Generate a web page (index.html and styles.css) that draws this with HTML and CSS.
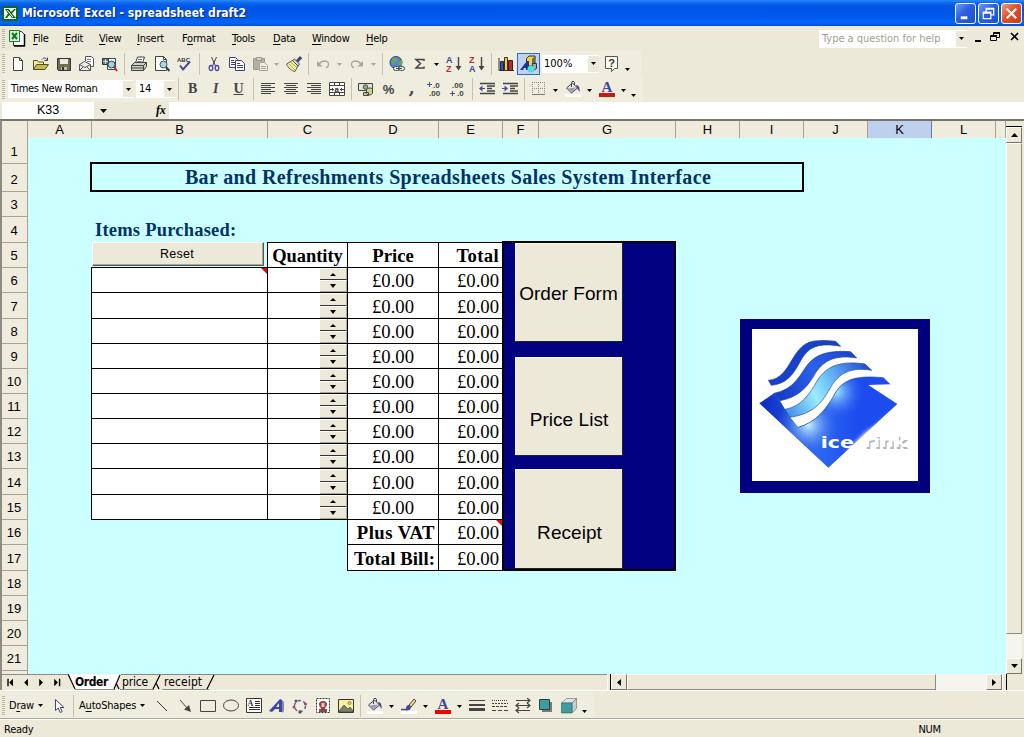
FILE: index.html
```html
<!DOCTYPE html>
<html lang="en">
<head>
<meta charset="utf-8">
<title>Microsoft Excel - spreadsheet draft2</title>
<link rel="stylesheet" href="styles.css">
</head>
<body>
<svg class="defs" width="0" height="0" aria-hidden="true">
  <defs>
    <symbol id="excel" viewBox="0 0 16 16"><path fill="#0a6a16" d="M0 1h16v15H0z"/><path fill="#fff" d="M2 3h12v11H2z"/><path fill="#0a6a16" d="M3 4h4l2 3 3-3h2L10 8.500l4 4.500h-4L7.500 10 5 13H3l3-4.500z"/><path stroke="#fff" d="m5 5 6 7"/></symbol>
    <symbol id="book" viewBox="0 0 18 18"><path fill="#fff" stroke="#333" d="M5.500 2.500h8l3 3v11h-11z"/><path fill="none" stroke="#000" stroke-width="1.500" d="M16.500 5v12H6"/><path fill="#d9f0d4" stroke="#16812a" d="M1.500 1.500h10v11h-10z"/><path stroke="#0b7a1c" stroke-width="2" d="m4 4 5 6M9 4l-5 6"/></symbol>
    <symbol id="new" viewBox="0 0 16 16"><path fill="#fff" stroke="#444" d="M3.500 1.500h6l3 3v10h-9zM9.500 1.500v3h3"/></symbol>
    <symbol id="open" viewBox="0 0 16 16"><path fill="#f2ef9a" stroke="#55502a" d="M.5 13.500v-9h4l1 1.500h5v2"/><path fill="#c4bd4e" stroke="#55502a" d="m.5 13.500 3-5h12l-3.500 5z"/><path fill="none" stroke="#444" d="M9 3.500c2-2.500 4-1.500 5 .5M14.500 1.500v3h-3"/></symbol>
    <symbol id="save" viewBox="0 0 16 16"><path fill="#6f6f4c" stroke="#333" d="M1.500 2.500h13v12h-12l-1-1z"/><path fill="#e8e8e4" d="M4 3h8v5H4z"/><path fill="#bbb" d="M5 11h6v3H5z"/><path fill="#333" d="M6 11h2v3H6z"/></symbol>
    <symbol id="mail" viewBox="0 0 16 16"><path fill="#fff" stroke="#555" d="M6.500 5V.5h6l2 2v8h-3"/><path stroke="#77a" d="M8 3.500h4M8 5.500h4"/><path fill="#eee" stroke="#555" d="m.5 8.500 5-3 6 3v6H.5z"/><path fill="none" stroke="#555" d="m.5 8.500 5.500 3 5.500-3M.5 14.500 4 11M11.500 14.500 8 11"/></symbol>
    <symbol id="search" viewBox="0 0 16 16"><path fill="#fff" stroke="#445" d="M5.500 2.500h8v11h-8z"/><path fill="#577" stroke="#334" d="M.5 2.500h6v6h-6z"/><path stroke="#ddd" d="M1 5.500h5M3.500 3v5"/><circle cx="9.500" cy="8.500" r="3.500" fill="#9cd5dd" stroke="#345"/><path stroke="#c4272d" stroke-width="2" d="m12 11 3 4"/></symbol>
    <symbol id="print" viewBox="0 0 16 16"><path fill="#fff" stroke="#444" d="m4.500 7 2-6h7l-2 6z"/><path stroke="#777" d="M7 3.500h4M6.500 5.500h4"/><path fill="#cfcfc4" stroke="#444" d="m.5 9.500 3-3h12v4l-3 4H.5z"/><path fill="none" stroke="#444" d="M.5 9.500h12l3-3M12.500 9.500v5M1 12h11"/></symbol>
    <symbol id="preview" viewBox="0 0 16 16"><path fill="#fff" stroke="#444" d="M1.500.5h8l3 3v11h-11zM9.500.5v3h3"/><circle cx="9.500" cy="8.500" r="3.500" fill="#a6d9df" stroke="#456"/><path stroke="#444" stroke-width="2" d="m12 11 3.500 4"/></symbol>
    <symbol id="spell" viewBox="0 0 16 16"><text x="0" y="5.500" class="tiny">ABC</text><path fill="none" stroke="#4a4aa0" stroke-width="2" d="m3 9.500 3 4 7-8"/></symbol>
    <symbol id="cut" viewBox="0 0 16 16"><path fill="none" stroke="#444" d="m5.500 1 4 9M10.500 1l-4 9"/><g fill="none" stroke="#4a4aa0" stroke-width="1.300"><ellipse cx="5" cy="12" rx="1.800" ry="2.500"/><ellipse cx="11" cy="12" rx="1.800" ry="2.500"/></g></symbol>
    <symbol id="copy" viewBox="0 0 16 16"><g fill="#fff" stroke="#3f3f80"><path d="M.5 1.500h6l2 2v8h-8z"/><path d="M6.500 4.500h6l3 3v7h-9z"/><path d="M2 4.500h3M2 6.500h4M2 8.500h4M8 7.500h3M8 9.500h6M8 11.500h6"/></g></symbol>
    <symbol id="paste" viewBox="0 0 16 16"><path fill="#b4b1a4" stroke="#9b988c" d="M1.500 2.500h11v11h-11z"/><path fill="#d5d2c4" stroke="#9b988c" d="M4.500 1.500h5v3h-5z"/><path fill="#efedde" stroke="#a9a698" d="M7.500 6.500h5l3 3v5h-8z"/><path stroke="#a9a698" d="M9 10.500h5M9 12.500h5"/></symbol>
    <symbol id="brush" viewBox="0 0 16 16"><path fill="#f6f0a0" stroke="#555" d="m.5 8 6-3.500L12 10l-3 5.500C6 15 2 12 .5 8z"/><path stroke="#aaa35a" d="m3 8 6 6M5 6.500l6 5"/><path fill="#dedede" stroke="#445" d="m6.500 4.500 2-1.500 5 5-1.500 2z"/><path stroke="#44447c" stroke-width="3" d="m11 5.500 4-4.500"/></symbol>
    <symbol id="undo" viewBox="0 0 16 16"><path fill="none" stroke="#aaa799" stroke-width="1.300" d="M4 8c3-4 9-4 9.500 0 .2 2-1 3.500-2.500 3.500"/><path fill="#aaa799" d="M2 5v5.500h5.500z"/></symbol>
    <symbol id="redo" viewBox="0 0 16 16"><path fill="none" stroke="#aaa799" stroke-width="1.300" d="M12 8C9 4 3 4 2.500 8c-.2 2 1 3.500 2.500 3.500"/><path fill="#aaa799" d="M14 5v5.500H8.500z"/></symbol>
    <symbol id="link" viewBox="0 0 16 16"><circle cx="7" cy="6.500" r="6" fill="#5d80cf" stroke="#33406e"/><path fill="#65a566" d="M3 2.500 7 1l2 3-3 3-3 1zM9 6l4-2v5l-3 1z"/><g fill="#eee" stroke="#444"><rect x="4.500" y="10.500" width="6" height="4" rx="2"/><rect x="9.500" y="10.500" width="6" height="4" rx="2"/></g><path stroke="#444" d="M7 12.500h6"/></symbol>
    <symbol id="sum" viewBox="0 0 16 16"><path fill="none" stroke="#444" stroke-width="1.500" d="M12 5V3.500H4l4.500 4L4 12h8v-1.500"/></symbol>
    <symbol id="sorta" viewBox="0 0 16 16"><text x="0" y="7" class="sort blue">A</text><text x="0" y="15.500" class="sort red">Z</text><path stroke="#444" stroke-width="1.400" d="M12.500 1v12"/><path fill="#444" d="M9.500 10h6l-3 4.500z"/></symbol>
    <symbol id="sortz" viewBox="0 0 16 16"><text x="0" y="7" class="sort red">Z</text><text x="0" y="15.500" class="sort blue">A</text><path stroke="#444" stroke-width="1.400" d="M12.500 1v12"/><path fill="#444" d="M9.500 10h6l-3 4.500z"/></symbol>
    <symbol id="chart" viewBox="0 0 16 16"><path fill="none" stroke="#333" d="M1 2v12.500h15"/><path fill="#2b55c4" stroke="#223" d="M2.500 5.500h3v9h-3z"/><path fill="#f6ce2f" stroke="#332" d="M6.500 1.500h3v13h-3z"/><path fill="#c3262e" stroke="#322" d="M10.500 4.500h4v10h-4z"/></symbol>
    <symbol id="drawing" viewBox="0 0 18 18"><path fill="#f2d33c" stroke="#333" d="M6.500 3.500 9 1h6v8l-3 2H6.500z"/><path fill="#6d6a55" d="M12 4l3-3v8l-3 2z"/><path fill="#9fb4b0" stroke="#333" d="M12.500 8.500h4v5l-3 2z"/><path fill="#16309c" d="m0 15 7-9h2v9H6v-2H4l-1 2z"/><circle cx="11" cy="14" r="3.500" fill="#48e0dd"/></symbol>
    <symbol id="help" viewBox="0 0 16 16"><path fill="#fffff2" stroke="#555" d="M1.500.5h12v12h-3l-3 3v-3h-6z"/><text x="4.300" y="10.500" class="qm">?</text></symbol>
    <symbol id="al" viewBox="0 0 16 16"><path stroke="#444" d="M1 2.500h14M1 4.500h10M1 6.500h14M1 8.500h10M1 10.500h14M1 12.500h10"/></symbol>
    <symbol id="ac" viewBox="0 0 16 16"><path stroke="#444" d="M1 2.500h14M3 4.500h10M1 6.500h14M3 8.500h10M1 10.500h14M3 12.500h10"/></symbol>
    <symbol id="ar" viewBox="0 0 16 16"><path stroke="#444" d="M1 2.500h14M5 4.500h10M1 6.500h14M5 8.500h10M1 10.500h14M5 12.500h10"/></symbol>
    <symbol id="merge" viewBox="0 0 16 16"><path fill="#fff" stroke="#444" d="M.5 1.500h15v13H.5zM0 4.500h16M0 11.500h16M5.500 1v3.500M10.500 1v3.500M5.500 11.500v3M10.500 11.500v3"/><text x="5.500" y="10.500" class="merge-a">a</text><path stroke="#444" d="M1 8.500h4M11 8.500h4M3.500 7v3M12.500 7v3"/></symbol>
    <symbol id="money" viewBox="0 0 16 16"><path fill="#dfe6d6" stroke="#444" d="M.5 2.500h14v7H.5z"/><circle cx="7.500" cy="6" r="2.300" fill="#92a68a" stroke="#555"/><path fill="#d4cf90" stroke="#444" d="M8.500 8.500c2-2 5-2 6 0v4c-2 2-5 2-6 0zM5.500 11.500h5v3h-5z"/></symbol>
    <symbol id="incdec" viewBox="0 0 18 16"><path stroke="#4a4aa0" d="M1 3.500h5M3.500 1v5"/><text x="7" y="7" class="dec">.0</text><text x="3" y="15" class="dec">.00</text></symbol>
    <symbol id="decdec" viewBox="0 0 18 16"><text x="3" y="7" class="dec">.00</text><path stroke="#4a4aa0" d="M1 12.500h5M3.500 10v5"/><text x="8" y="15" class="dec">.0</text></symbol>
    <symbol id="outdent" viewBox="0 0 16 16"><path stroke="#444" d="M1 2.500h15M8 5h8M8 7.500h5M8 10h8M1 12.500h15" stroke-width="1.300"/><path stroke="#4a4aa0" d="M1 7.500h5"/><path fill="#4a4aa0" d="M0 7.500 3.500 4.500v6z"/></symbol>
    <symbol id="indent" viewBox="0 0 16 16"><path stroke="#444" d="M1 2.500h15M8 5h8M8 7.500h5M8 10h8M1 12.500h15" stroke-width="1.300"/><path stroke="#4a4aa0" d="M0 7.500h5"/><path fill="#4a4aa0" d="M6 7.500 2.500 4.500v6z"/></symbol>
    <symbol id="borders" viewBox="0 0 16 16"><path fill="none" stroke="#888" stroke-dasharray="1 1" d="M1.500 1v12M7.500 1v12M13.500 1v12M1 1.500h13M1 7.500h13"/><path stroke="#777" d="M1 13.500h13"/></symbol>
    <symbol id="bucket" viewBox="0 0 16 16"><path fill="#e4e4ea" stroke="#444" d="m1.500 7 6-5 5 5-6 5z"/><path fill="#9a9ab8" d="m3 7.500 8-1L7 11z"/><path fill="none" stroke="#444" d="M6.500 6V1.500c0-1.500 3-1.500 3 0V4"/><path fill="#4c4c8c" d="M11 4c3 0 4 3 3.500 7L12 7z"/><path fill="#fff" d="M0 13h16v3H0z"/></symbol>
    <symbol id="fontcolor" viewBox="0 0 16 16"><text x="2.500" y="11" class="fa">A</text><path fill="#d4140e" d="M0 12h16v4H0z"/></symbol>
    <symbol id="fontcolor2" viewBox="0 0 16 16"><text x="2.500" y="11" class="fa">A</text><path fill="#f40000" d="M0 12h16v4H0z"/></symbol>
    <symbol id="pointer" viewBox="0 0 16 16"><path fill="#fff" stroke="#44446c" d="M4.500 1.500v11l2.700-2.500 2 4.500 2-1-2-4H13z"/></symbol>
    <symbol id="line" viewBox="0 0 16 16"><path stroke="#333" d="m3 3 10 10"/></symbol>
    <symbol id="arrow" viewBox="0 0 16 16"><path stroke="#444" d="m3 2 8 9"/><path fill="#444" d="m14 14-2-7-5 4.500z"/></symbol>
    <symbol id="rect" viewBox="0 0 16 16"><path fill="none" stroke="#444" d="M.5 2.500h15v11H.5z"/></symbol>
    <symbol id="oval" viewBox="0 0 16 16"><ellipse cx="8" cy="7.500" rx="7.500" ry="5.500" fill="none" stroke="#444"/></symbol>
    <symbol id="textbox" viewBox="0 0 16 16"><path fill="#fff" stroke="#333" d="M.5.5h15v14H.5z"/><text x="1.500" y="8" class="tba">A</text><path stroke="#333" d="M9 3.500h5M9 5.500h5M9 7.500h5M3 9.500h11M3 11.500h11"/></symbol>
    <symbol id="wordart" viewBox="0 0 16 16"><path fill="#3c44b0" d="M0 13 11 1l2 1v12h-3v-3H6l-3 3zm7-4h3V5z"/><path fill="#858aa5" d="m13 2 2 2v9l-2 2z"/></symbol>
    <symbol id="diagram" viewBox="0 0 16 16"><circle cx="8" cy="8" r="5.500" fill="none" stroke="#4a4aa0" stroke-width="1.300" stroke-dasharray="3 2.760"/><g fill="#555"><circle cx="4" cy="3" r="1.500"/><circle cx="13.500" cy="6" r="1.500" fill="#a34a5a"/><circle cx="8" cy="14" r="1.700"/><circle cx="2" cy="9" r="1.500" fill="#a34a5a"/></g></symbol>
    <symbol id="clip" viewBox="0 0 16 16"><path fill="#fff" stroke="#333" stroke-dasharray="2 1" d="M1.500.5h13v14h-13z"/><path fill="#8f4448" d="M4 6c0-4 8-4 8 0 0 3-2 3-2 5h2v3H4v-3h2c0-2-2-2-2-5z"/><path fill="#f0c7b8" d="M6.500 5h3v4h-3z"/></symbol>
    <symbol id="picture" viewBox="0 0 16 16"><path fill="#f6f29c" stroke="#333" d="M.5 1.500h15v13H.5z"/><circle cx="11.500" cy="5" r="1.500" fill="#f7d14a" stroke="#666" stroke-width=".7"/><path fill="#7d8069" stroke="#444" stroke-width=".7" d="m1 13 5-6 4 4 2-2 3 4v1H1z"/></symbol>
    <symbol id="pen" viewBox="0 0 16 16"><path fill="#f0da77" stroke="#444" d="m8 7 5-6 2 2-5 6z"/><path fill="#44449c" d="M5 11c0-3 1-4 3-4l2 2c0 3-3 4-6 3z"/><path stroke="#44449c" stroke-width="1.500" d="M0 11.500h6"/><path fill="#fff" d="M0 13h16v3H0z"/></symbol>
    <symbol id="weights" viewBox="0 0 16 16"><path fill="#444" d="M0 2h16v1H0zM0 6h16v2H0zM0 10h16v3H0z"/></symbol>
    <symbol id="dashes" viewBox="0 0 16 16"><path stroke="#444" stroke-dasharray="1 1" d="M0 2.500h16"/><path stroke="#444" stroke-dasharray="2 1" d="M0 5.500h16"/><path stroke="#444" stroke-dasharray="3 1" d="M0 8.500h16"/><path stroke="#444" stroke-dasharray="4 2" d="M0 12.500h16"/></symbol>
    <symbol id="arrows" viewBox="0 0 16 16"><path fill="none" stroke="#444" stroke-width="1.200" d="M1 2.500h14M1 7.500h14M1 12.500h14M12 0l3 2.500L12 5M12 5l3 2.500L12 10M4 5 1 7.500 4 10M4 10l-3 2.500L4 15"/></symbol>
    <symbol id="shadow" viewBox="0 0 16 16"><path fill="#777a7a" d="M4 4h10v10H4z"/><path fill="#3f9c9e" stroke="#244" d="M1.500 1.500h10v10h-10z"/></symbol>
    <symbol id="cube" viewBox="0 0 16 16"><path fill="#d9e8e8" stroke="#667" stroke-width=".6" d="m.5 5 5-4.500h10L11 5z"/><path fill="#c4cfd0" stroke="#667" stroke-width=".6" d="m11 5 4.500-4.500v10L11 15z"/><path fill="#3f9c9e" stroke="#355" stroke-width=".6" d="M.5 5H11v10H.5z"/></symbol>
    <symbol id="dd" viewBox="0 0 7 4"><path d="M0 0h7L3.500 4z"/></symbol>
  </defs>
</svg>

<div class="window">
  <header class="titlebar">
    <svg class="app-icon"><use href="#excel"/></svg>
    <span class="title">Microsoft Excel - spreadsheet draft2</span>
    <div class="win-buttons">
      <span class="wb"><svg viewBox="0 0 20 20"><path fill="#fff" d="M5 13h7v3H5z"/></svg></span>
      <span class="wb"><svg viewBox="0 0 20 20"><path fill="none" stroke="#fff" stroke-width="1.300" d="M7.500 8V4.500h8v7H13M7.500 5.500h8M4.500 8.500h8v7h-8zM4.500 9.500h8"/></svg></span>
      <span class="wb close"><svg viewBox="0 0 20 20"><path stroke="#fff" stroke-width="2.200" d="m5 5 10 10M15 5 5 15"/></svg></span>
    </div>
  </header>

  <nav class="menubar">
    <i class="grip"></i>
    <svg class="book"><use href="#book"/></svg>
    <span class="m1"><u>F</u>ile</span><span class="m2"><u>E</u>dit</span><span class="m3"><u>V</u>iew</span><span class="m4"><u>I</u>nsert</span><span class="m5">F<u>o</u>rmat</span><span class="m6"><u>T</u>ools</span><span class="m7"><u>D</u>ata</span><span class="m8"><u>W</u>indow</span><span class="m9"><u>H</u>elp</span>
    <div class="ask"><span>Type a question for help</span><b class="combo-arrow"><svg><use href="#dd"/></svg></b></div>
    <svg class="doc-buttons" viewBox="0 0 46 12"><path fill="none" stroke="#000" stroke-width="2" d="M1 10h6M20 2h6M17 5h6"/><path fill="none" stroke="#000" d="M19.500 5V1.500h6v5H23M16.500 4.500h6v5h-6z"/><path stroke="#000" stroke-width="1.700" d="m37 2 7 7M44 2l-7 7"/></svg>
  </nav>

  <div class="toolbar standard">
    <i class="grip"></i>
    <b class="tb"><svg><use href="#new"/></svg></b><b class="tb"><svg><use href="#open"/></svg></b><b class="tb"><svg><use href="#save"/></svg></b><b class="tb"><svg><use href="#mail"/></svg></b><b class="tb"><svg><use href="#search"/></svg></b><i class="sep"></i>
    <b class="tb"><svg><use href="#print"/></svg></b><b class="tb"><svg><use href="#preview"/></svg></b><b class="tb"><svg><use href="#spell"/></svg></b><i class="sep"></i>
    <b class="tb"><svg><use href="#cut"/></svg></b><b class="tb"><svg><use href="#copy"/></svg></b><b class="tb"><svg><use href="#paste"/></svg></b><b class="dd off"><svg><use href="#dd"/></svg></b><b class="tb"><svg><use href="#brush"/></svg></b><i class="sep"></i>
    <b class="tb"><svg><use href="#undo"/></svg></b><b class="dd off"><svg><use href="#dd"/></svg></b><b class="tb"><svg><use href="#redo"/></svg></b><b class="dd off"><svg><use href="#dd"/></svg></b><i class="sep"></i>
    <b class="tb"><svg><use href="#link"/></svg></b><b class="tb"><svg><use href="#sum"/></svg></b><b class="dd"><svg><use href="#dd"/></svg></b><b class="tb"><svg><use href="#sorta"/></svg></b><b class="tb"><svg><use href="#sortz"/></svg></b><i class="sep"></i>
    <b class="tb"><svg><use href="#chart"/></svg></b><b class="tb pressed"><svg><use href="#drawing"/></svg></b>
    <div class="combo zoom"><span>100%</span><b class="combo-arrow"><svg><use href="#dd"/></svg></b></div>
    <b class="tb"><svg><use href="#help"/></svg></b><b class="more"><svg><use href="#dd"/></svg></b>
  </div>

  <div class="toolbar format">
    <i class="grip"></i>
    <div class="combo font"><span>Times New Roman</span><b class="combo-arrow"><svg><use href="#dd"/></svg></b></div>
    <div class="combo size"><span>14</span><b class="combo-arrow"><svg><use href="#dd"/></svg></b></div>
    <i class="sep"></i>
    <b class="tb letter">B</b><b class="tb letter it">I</b><b class="tb letter un">U</b><i class="sep"></i>
    <b class="tb"><svg><use href="#al"/></svg></b><b class="tb"><svg><use href="#ac"/></svg></b><b class="tb"><svg><use href="#ar"/></svg></b><b class="tb"><svg><use href="#merge"/></svg></b><i class="sep"></i>
    <b class="tb"><svg><use href="#money"/></svg></b><b class="tb pct">%</b><b class="tb comma">,</b><b class="tb"><svg class="wide"><use href="#incdec"/></svg></b><b class="tb"><svg class="wide"><use href="#decdec"/></svg></b><i class="sep"></i>
    <b class="tb"><svg><use href="#outdent"/></svg></b><b class="tb"><svg><use href="#indent"/></svg></b><i class="sep"></i>
    <b class="tb"><svg><use href="#borders"/></svg></b><b class="dd"><svg><use href="#dd"/></svg></b><b class="tb"><svg><use href="#bucket"/></svg></b><b class="dd"><svg><use href="#dd"/></svg></b><b class="tb"><svg><use href="#fontcolor"/></svg></b><b class="dd"><svg><use href="#dd"/></svg></b><b class="more"><svg><use href="#dd"/></svg></b>
  </div>

  <div class="formula">
    <span class="name-box">K33</span>
    <span class="fx-area"><svg class="name-arrow"><use href="#dd"/></svg><em>fx</em></span>
    <span class="fx-input"></span>
  </div>

  <main class="workbook">
    <div class="grid-pane">
      <div class="col-heads"><b></b><b>A</b><b>B</b><b>C</b><b>D</b><b>E</b><b>F</b><b>G</b><b>H</b><b>I</b><b>J</b><b class="sel">K</b><b>L</b><b></b></div>
      <div class="row-heads"><b>1</b><b>2</b><b>3</b><b>4</b><b>5</b><b>6</b><b>7</b><b>8</b><b>9</b><b>10</b><b>11</b><b>12</b><b>13</b><b>14</b><b>15</b><b>16</b><b>17</b><b>18</b><b>19</b><b>20</b><b>21</b><b></b></div>
      <div class="sheet">
        <div class="banner">Bar and Refreshments Spreadsheets Sales System Interface</div>
        <div class="items-label">Items Purchased:</div>
        <div class="reset">Reset</div>
        <div class="column items"><div class="note"></div><div></div><div></div><div></div><div></div><div></div><div></div><div></div><div></div><div></div></div>
        <div class="column qty">
          <div class="head">Quantity</div>
          <div><span class="spin"><i></i><i></i></span></div><div><span class="spin"><i></i><i></i></span></div><div><span class="spin"><i></i><i></i></span></div><div><span class="spin"><i></i><i></i></span></div><div><span class="spin"><i></i><i></i></span></div><div><span class="spin"><i></i><i></i></span></div><div><span class="spin"><i></i><i></i></span></div><div><span class="spin"><i></i><i></i></span></div><div><span class="spin"><i></i><i></i></span></div><div><span class="spin"><i></i><i></i></span></div>
        </div>
        <div class="column price"><div class="head">Price</div><div>£0.00</div><div>£0.00</div><div>£0.00</div><div>£0.00</div><div>£0.00</div><div>£0.00</div><div>£0.00</div><div>£0.00</div><div>£0.00</div><div>£0.00</div><div class="head right vat">Plus VAT</div><div class="head right">Total Bill:</div></div>
        <div class="column total"><div class="head">Total</div><div>£0.00</div><div>£0.00</div><div>£0.00</div><div>£0.00</div><div>£0.00</div><div>£0.00</div><div>£0.00</div><div>£0.00</div><div>£0.00</div><div>£0.00</div><div class="note">£0.00</div><div>£0.00</div></div>
        <div class="panel"><div class="big order">Order Form</div><div class="big prices">Price List</div><div class="big receipt">Receipt</div></div>
        <svg class="logo" viewBox="30 27 570 522">
          <defs>
            <linearGradient id="band2" gradientUnits="userSpaceOnUse" x1="140" y1="270" x2="380" y2="130"><stop offset="0" stop-color="#1238c8"/><stop offset=".5" stop-color="#2c62ea"/><stop offset="1" stop-color="#1a40cc"/></linearGradient>
            <linearGradient id="band3" gradientUnits="userSpaceOnUse" x1="170" y1="310" x2="420" y2="170"><stop offset="0" stop-color="#3e8cf0"/><stop offset=".35" stop-color="#9becff"/><stop offset=".55" stop-color="#6cc0fa"/><stop offset="1" stop-color="#1c46d6"/></linearGradient>
            <radialGradient id="glow" gradientUnits="userSpaceOnUse" cx="235" cy="345" r="95"><stop offset="0" stop-color="#c4f4ff"/><stop offset="1" stop-color="#2a5cf0" stop-opacity="0"/></radialGradient>
            <radialGradient id="ice" gradientUnits="userSpaceOnUse" cx="318" cy="245" r="85"><stop offset="0" stop-color="#a8f0ff"/><stop offset="1" stop-color="#2a5cf0" stop-opacity="0"/></radialGradient>
            <linearGradient id="body" gradientUnits="userSpaceOnUse" x1="110" y1="330" x2="380" y2="300"><stop offset="0" stop-color="#0f2fc4"/><stop offset=".5" stop-color="#2c68f0"/><stop offset="1" stop-color="#1c4cf0"/></linearGradient>
            <path id="diamond" d="M88 280 132 250 150 272 165 298 180 322 205 352C260 335 285 300 310 260 335 210 370 195 460 203L480 223 415 225 502 282 295 473z"/>
            <clipPath id="inside"><use href="#diamond"/></clipPath>
            <filter id="soft"><feGaussianBlur stdDeviation="7"/></filter>
          </defs>
          <path fill="#00007f" d="M30 27h570v522H30z"/><path fill="#fff" d="M66 57h498v456H66z"/>
          <use href="#diamond" fill="url(#body)"/>
          <g clip-path="url(#inside)"><circle cx="235" cy="345" r="95" fill="url(#glow)"/><circle cx="318" cy="245" r="85" fill="url(#ice)"/></g>
          <path fill="#fff" filter="url(#soft)" d="M515 292 468 322C445 350 425 352 402 372 385 390 375 398 350 428L400 440 520 340z"/>
          <g stroke="#23448b" stroke-width="2">
            <path fill="#1740cc" d="M115 211C190 205 180 92 265 92 285 91 300 92 317 94L332 109C240 92 225 130 205 165 185 200 165 222 124 226z"/>
            <path fill="url(#band2)" d="M132 250C185 240 205 205 225 175 250 135 290 120 362 125L380 144C300 130 270 165 250 200 225 240 200 262 150 272z"/>
            <path fill="url(#band3)" d="M165 298C215 290 240 250 260 215 285 172 325 150 405 162L425 181C350 168 320 200 300 235 270 290 240 312 180 322z"/>
            <path fill="none" d="M205 352C260 335 285 300 310 260 335 210 370 195 460 203L480 223"/>
          </g>
          <text x="272" y="413" class="ice" textLength="100" lengthAdjust="spacingAndGlyphs">ice</text>
          <text x="406" y="416" class="rink-shadow" textLength="128" lengthAdjust="spacingAndGlyphs">rink</text><text x="402" y="412" class="ice" textLength="128" lengthAdjust="spacingAndGlyphs">rink</text>
        </svg>
      </div>
    </div>
    <div class="vscroll"><i class="split"></i><b class="sb"><svg viewBox="0 0 7 4"><path d="M0 4h7L3.500 0z"/></svg></b><i class="thumb"></i><i class="track"></i><b class="sb"><svg><use href="#dd"/></svg></b></div>
  </main>

  <div class="tabbar">
    <svg class="tabnav" viewBox="0 0 66 16"><path d="M4 4h1.500v8H4zM10 4v8L6 8zM26 4v8l-4-4zM38 4v8l4-4zM54 4v8l4-4zM59 4h1.500v8H59z"/></svg>
    <div class="tabs">
      <svg class="tab-lines" viewBox="0 0 152 17"><path fill="#fff" d="M1 0h53l-6 16H8z"/><path fill="none" stroke="#8a887c" d="M54 .5h98M8 15.500h40M53 15.500h34M95 15.500h47"/><path fill="none" stroke="#000" stroke-width="1.200" d="m1 0 7 15M47 15l6-14M49 9l3 6M86 15l7-14M89 9l3 6M140 15l7-14"/></svg>
      <b>Order</b><span class="t-price">price</span><span class="t-receipt">receipt</span>
    </div>
    <i class="tab-rest"></i>
    <div class="hscroll"><i class="split"></i><b class="sb"><svg viewBox="0 0 4 7"><path d="M4 0v7L0 3.500z"/></svg></b><i class="thumb"></i><i class="track"></i><b class="sb"><svg viewBox="0 0 4 7"><path d="M0 0v7l4-3.500z"/></svg></b><i class="split end"></i></div>
  </div>

  <div class="toolbar drawbar">
    <i class="grip"></i>
    <span class="draw"><span>D<u>r</u>aw</span><svg><use href="#dd"/></svg></span>
    <b class="tb"><svg><use href="#pointer"/></svg></b><i class="sep"></i>
    <span class="shapes"><span>A<u>u</u>toShapes</span><svg><use href="#dd"/></svg></span>
    <b class="tb"><svg><use href="#line"/></svg></b><b class="tb"><svg><use href="#arrow"/></svg></b><b class="tb"><svg><use href="#rect"/></svg></b><b class="tb"><svg><use href="#oval"/></svg></b><b class="tb"><svg><use href="#textbox"/></svg></b><b class="tb"><svg><use href="#wordart"/></svg></b><b class="tb"><svg><use href="#diagram"/></svg></b><b class="tb"><svg><use href="#clip"/></svg></b><b class="tb"><svg><use href="#picture"/></svg></b><i class="sep"></i>
    <b class="tb"><svg><use href="#bucket"/></svg></b><b class="dd"><svg><use href="#dd"/></svg></b><b class="tb"><svg><use href="#pen"/></svg></b><b class="dd"><svg><use href="#dd"/></svg></b><b class="tb"><svg><use href="#fontcolor2"/></svg></b><b class="dd"><svg><use href="#dd"/></svg></b>
    <b class="tb"><svg><use href="#weights"/></svg></b><b class="tb"><svg><use href="#dashes"/></svg></b><b class="tb"><svg><use href="#arrows"/></svg></b><b class="tb"><svg><use href="#shadow"/></svg></b><b class="tb"><svg><use href="#cube"/></svg></b><b class="more"><svg><use href="#dd"/></svg></b>
  </div>

  <footer class="status"><span>Ready</span><span class="num">NUM</span></footer>
</div>
</body>
</html>
```
FILE: styles.css
```css
* { box-sizing: border-box; }
body { margin: 0; }
.window {
  width: 1024px; height: 737px; overflow: hidden;
  display: flex; flex-direction: column;
  background: #ece9d8; color: #000;
  font: 11px/14px "DejaVu Sans Condensed", "DejaVu Sans", sans-serif;
  letter-spacing: -0.25px; white-space: nowrap;
}
.window > * { flex: none; }
svg { display: block; flex: none; }
.defs { position: absolute; }
i { font-style: normal; }
u { text-underline-offset: 2px; }

/* title bar */
.titlebar {
  height: 26px; padding: 0 2px 0 2px; display: flex; align-items: center;
  background: linear-gradient(#2a8cf8 0, #0d66ee 3px, #0055e5 7px, #0058ea 16px, #0266fb 22px, #0260f0 24px, #0148c4 26px);
}
.app-icon { width: 16px; height: 16px; margin-bottom: 1px; }
.title { margin-left: 4px; color: #fff; font: bold 12px/16px "DejaVu Sans Condensed", sans-serif; letter-spacing: 0.06px; text-shadow: 1px 1px 1px #0a2a80; }
.win-buttons { margin-left: auto; display: flex; gap: 2px; }
.wb { width: 21px; height: 21px; border: 1px solid #fff; border-radius: 3px; background: linear-gradient(135deg, #6f9cf5, #2a5fe0 45%, #1d4fd0); }
.wb svg { width: 19px; height: 19px; }
.close { background: linear-gradient(135deg, #f09a80, #e0522c 45%, #c43c16); }

/* menu */
.menubar { height: 25px; display: flex; align-items: center; }
.grip { flex: none; width: 6px; height: 19px; background: repeating-linear-gradient(#bbb8a6 0 1px, transparent 1px 2px) 2px 0 / 3px 100% no-repeat; }
.book { width: 18px; height: 18px; margin: 0 7px 2px 2px; }
.m1 { width: 32px; } .m2 { width: 34px; } .m3 { width: 38px; } .m4 { width: 45px; } .m5 { width: 50px; }
.m6 { width: 41px; } .m7 { width: 39px; } .m8 { width: 54px; }
.ask { margin-left: auto; width: 148px; height: 18px; background: #fff; color: #a19f92; display: flex; align-items: center; justify-content: space-between; padding-left: 3px; letter-spacing: -0.02px; }
.combo-arrow { width: 11px; height: 16px; margin-right: 0; background: #ece9d8; display: flex; align-items: center; justify-content: center; }
.combo-arrow svg { width: 5px; height: 3px; }
.doc-buttons { width: 46px; height: 12px; margin: 0 4px 3px 7px; }

/* toolbars */
.toolbar { display: flex; align-items: center; background: #efedde; }
.standard { width: 641px; height: 25px; }
.format { width: 643px; height: 26px; }
.tb { flex: none; width: 23px; height: 22px; display: flex; align-items: center; justify-content: center; }
.tb svg { width: 16px; height: 16px; }
.tb .wide { width: 18px; }
.sep { flex: none; width: 6px; height: 22px; background: linear-gradient(#c5c2b2, #c5c2b2) 3px 0 / 1px 100% no-repeat; }
.dd { flex: none; width: 11px; display: flex; justify-content: center; padding-top: 2px; }
.dd svg, .more svg { width: 5px; height: 3px; }
.off svg { fill: #aaa799; }
.more { width: 11px; padding: 12px 0 0 2px; }
.pressed { border: 1px solid #316ac5; background: #c1d2ee; }
.pressed svg { width: 18px; height: 18px; }
.combo { height: 18px; background: #fff; display: flex; align-items: center; justify-content: space-between; flex: none; }
.zoom { width: 57px; margin: 0 1px 0 2px; padding-left: 2px; letter-spacing: 0; }
.font { width: 126px; margin-left: 2px; padding-left: 3px; letter-spacing: -0.35px; }
.size { width: 39px; margin-left: 2px; padding-left: 3px; }
.letter { font: bold 14px "Liberation Serif", serif; color: #444; }
.it { font-style: italic; }
.un { text-decoration: underline; }
.pct { font: bold 13px "Liberation Sans", sans-serif; color: #444; }
.comma { font: bold 17px/10px "DejaVu Serif", serif; color: #444; padding-bottom: 3px; }
.tiny { font: bold 6px "Liberation Sans", sans-serif; fill: #333; letter-spacing: 0; }
.sort { font: bold 9px "Liberation Sans", sans-serif; letter-spacing: 0; }
.blue { fill: #44449c; } .red { fill: #b0343c; }
.qm { font: bold 11px "Liberation Sans", sans-serif; fill: #333; }
.merge-a { font: bold 8px "Liberation Sans", sans-serif; fill: #333; }
.dec { font: bold 8px "Liberation Sans", sans-serif; fill: #444; letter-spacing: 0; }
.fa { font: bold 15px "Liberation Serif", serif; fill: #44449c; }
.tba { font: bold 8px "Liberation Serif", serif; fill: #333; }

/* formula bar */
.formula { height: 17px; display: flex; }
.name-box { width: 92px; margin-left: 2px; background: #fff; text-align: center; font: 12.500px/17px "Liberation Sans", sans-serif; letter-spacing: 0; }
.fx-area { width: 75px; display: flex; align-items: center; padding-left: 6px; }
.name-arrow { width: 7px; height: 4px; }
.fx-area em { margin-left: 49px; font: italic bold 12px "Liberation Serif", serif; }
.fx-input { flex: 1; background: #fff; }

/* workbook */
.workbook { height: 555px; display: flex; border-top: 2px solid #77756a; border-left: 2px solid #8e8c80; }
.grid-pane {
  --cols: 64px 176px 80px 91px 64px 36px 137px 64px 64px 64px 64px 64px 10px;
  --body-rows: 25px 25px 26px 25px 25px 25px 25px 25px 25px 26px 25px 25px 26px;
  --rows: 26px 28px 25px 26px var(--body-rows) 25px 25px 25px 25px 3px;
  width: 1004px; display: grid; grid-template: 17px 536px / 26px 978px;
  font-family: "Liberation Sans", sans-serif; letter-spacing: 0;
}
.col-heads { grid-column: 1 / 3; display: grid; grid-template-columns: 26px var(--cols); }
.col-heads b, .row-heads b { font-weight: normal; background: #efecde; border: 0 solid #a5a294; border-width: 0 1px 1px 0; text-align: center; }
.col-heads b { font-size: 13px; line-height: 17px; }
.col-heads .sel { background: #bfd0ee; border-color: #5c7fae; }
.row-heads { display: grid; grid-template-rows: var(--rows); font-size: 13px; }
.row-heads b { display: flex; align-items: flex-end; justify-content: center; line-height: 16px; padding-bottom: 3px; padding-right: 1px; }
.row-heads b:last-child { border-bottom: 0; }
.sheet {
  background: #ccffff; display: grid;
  grid-template-columns: var(--cols); grid-template-rows: var(--rows);
  font-family: "Liberation Serif", serif; font-size: 18.700px; line-height: 24px;
}
.banner { grid-area: 2 / 2 / 3 / 10; margin: -2px 0 0 -2px; border: 2px solid #000; color: #003366; text-align: center; font-weight: bold; font-size: 20px; line-height: 27px; padding-left: 2px; letter-spacing: .37px; }
.items-label { grid-area: 4 / 2; font-weight: bold; color: #003366; padding: 1px 0 0 3px; font-size: 18.500px; letter-spacing: .22px; }
.reset { grid-area: 5 / 2; margin: -1px 4px 2px 0; background: #ece9d8; border: 1px solid; border-color: #fff #555 #555 #fff; box-shadow: inset -1px -1px #aca899; font: 12.500px/22px "Liberation Sans", sans-serif; text-align: center; padding-right: 2px; letter-spacing: .3px; }
.column { display: grid; grid-template-rows: var(--body-rows); }
.column > div { margin: -1px 0 0 -1px; border: 1px solid #000; background: #fff; position: relative; display: flex; align-items: center; justify-content: center; padding-top: 2px; }
.column .head { font-weight: bold; }
.items { grid-area: 6 / 2 / 16 / 3; grid-template-rows: 25px 26px 25px 25px 25px 25px 25px 25px 26px 25px; }
.qty { grid-area: 5 / 3 / 16 / 4; grid-template-rows: 25px 25px 26px 25px 25px 25px 25px 25px 25px 26px 25px; }
.qty .head { font-size: 18.500px; letter-spacing: -0.05px; }
.column.qty > div:not(.head) { padding: 0; justify-content: flex-end; align-items: stretch; }
.price { grid-area: 5 / 4 / 18 / 5; }
.total { grid-area: 5 / 5 / 18 / 6; }
.total .head { letter-spacing: .35px; }
.column.total > div { justify-content: flex-end; padding-right: 3px; }
.column .right { justify-content: flex-end; padding-right: 3px; letter-spacing: .1px; }
.column .vat { letter-spacing: .5px; }
.note::after { content: ""; position: absolute; top: 0; right: 0; border: 3px solid; border-color: #d01010 #d01010 transparent transparent; }
.spin { width: 27px; display: flex; flex-direction: column; }
.spin i { flex: 1; background: #ece9d8; border-bottom: 1px solid #333; border-right: 1px solid #aca899; border-top: 1px solid #fff; display: flex; align-items: center; justify-content: center; }
.spin i:last-child { border-bottom-color: #aca899; }
.spin i::after { content: ""; border: 3px solid transparent; border-top: 0; border-bottom-color: #000; }
.spin i:last-child::after { border-top: 4px solid #000; border-bottom: 0; }
.panel { grid-area: 5 / 6 / 18 / 8; margin: -2px 0 0 -1px; border: 2px solid #000; background: #000080; padding-left: 11px; display: flex; flex-direction: column; }
.big { width: 108px; border: 0 solid #222; border-width: 0 1px 1px 0; background: #ece9d8; box-shadow: inset 1px 1px #f8f6ee; text-align: center; font: 19px/24px "Liberation Sans", sans-serif; letter-spacing: .05px; }
.order { height: 100px; padding-top: 39px; }
.prices { height: 99px; margin-top: 15px; padding-top: 51px; padding-left: 1px; }
.receipt { height: 101px; margin-top: 13px; padding-top: 52px; padding-left: 2px; }
.logo { grid-area: 8 / 9 / 15 / 12; width: 190px; height: 174px; }
.ice { font: bold 46px "DejaVu Sans", sans-serif; fill: #fff; letter-spacing: 0; }
.rink-shadow { font: bold 46px "DejaVu Sans", sans-serif; fill: #b4b4bc; letter-spacing: 0; }

/* scroll bars */
.sb { flex: none; width: 16px; height: 16px; background: #ece9d8; border: 1px solid; border-color: #fff #77756a #77756a #fff; display: flex; align-items: center; justify-content: center; }
.vscroll .sb svg { width: 7px; height: 4px; }
.hscroll .sb svg { width: 4px; height: 7px; }
.thumb { background: #ece9d8; border: 1px solid; border-color: #fff #8e8c80 #8e8c80 #fff; }
.track { background: #f6f4ee; flex: 1; }
.vscroll { width: 16px; display: flex; flex-direction: column; }
.vscroll .split { height: 6px; border-bottom: 1px solid #000; }
.vscroll .thumb { height: 491px; }

/* sheet tabs */
.tabbar { height: 17px; display: flex; padding-left: 2px; border-bottom: 1px solid #fff; box-shadow: inset 2px 0 #8e8c80; }
.tabnav { width: 65px; height: 16px; border-top: 1px solid #8e8c80; }
.tabs { width: 152px; position: relative; font-size: 12px; line-height: 17px; letter-spacing: -0.2px; display: flex; }
.tabs > * { position: relative; }
.tabs .tab-lines { position: absolute; left: 0; top: 0; width: 152px; height: 17px; }
.tabs b { margin-left: 8px; width: 47px; letter-spacing: -0.4px; }
.t-price { width: 42px; }
.t-receipt { letter-spacing: 0.1px; }
.tab-rest { flex: 1; border-top: 1px solid #8e8c80; }
.hscroll { width: 400px; margin-right: 17px; display: flex; height: 16px; }
.hscroll .split { width: 4px; border-right: 1px solid #000; border-left: 1px solid #fff; }
.hscroll .end { width: 5px; }
.hscroll .thumb { width: 309px; }

.drawbar { height: 27px; width: 594px; margin-top: 1px; }
.draw, .shapes { display: flex; align-items: center; }
.draw svg, .shapes svg { width: 5px; height: 3px; }
.draw { width: 41px; padding-left: 3px; gap: 4px; }
.shapes { width: 74px; padding-left: 3px; gap: 4px; letter-spacing: -0.2px; }
.status { height: 18px; border-top: 1px solid #fff; box-shadow: 0 -1px #aca899; display: flex; line-height: 19px; padding-left: 4px; }
.num { margin-left: 885px; }
```
